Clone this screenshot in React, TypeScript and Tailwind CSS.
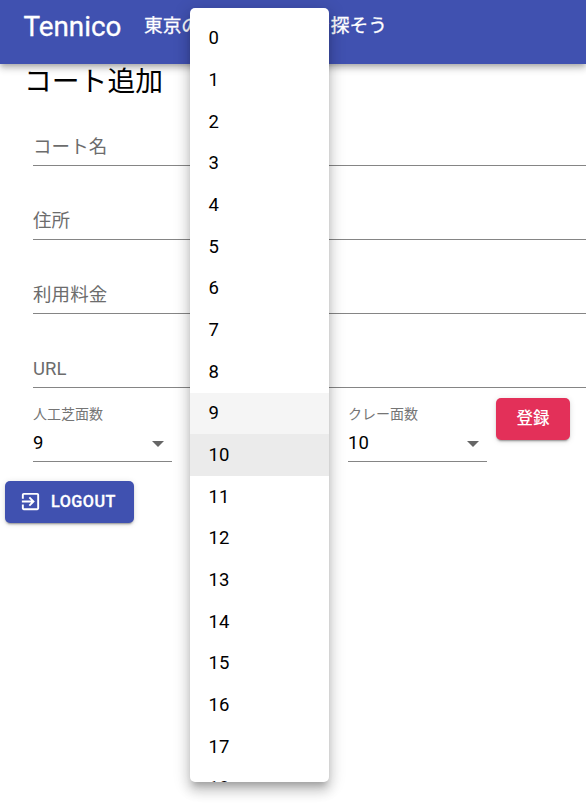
import React from 'react';

const jp = "font-['Roboto','Noto_Sans_CJK_JP',sans-serif]";

function Field({ label }: { label: string }) {
  return (
    <div className="ml-[33px] flex h-[74.1px] flex-col justify-end">
      <div className="flex h-[38px] items-center border-b border-[#858585] pt-[2px] text-[18.5px] tracking-[0.1px] text-[#6c6c6c]">
        {label}
      </div>
    </div>
  );
}

function Select({ label, value }: { label: string; value: string }) {
  return (
    <div className="flex h-[73.6px] w-[139px] shrink-0 flex-col">
      <div className="mt-[16px] h-[21px] whitespace-nowrap text-[14px] leading-[21px] text-[#757575]">{label}</div>
      <div className="flex h-[36.6px] items-center justify-between border-b border-[#858585] pr-[8px] text-[18.5px] text-black">
        <span className="pt-[2px]">{value}</span>
        <svg width="12" height="6" viewBox="0 0 12 6" className="mt-[2px]">
          <path d="M0 0h12L6 6z" fill="#666666" />
        </svg>
      </div>
    </div>
  );
}

function Menu() {
  return (
    <div className="absolute left-[190px] top-[8px] h-[774px] w-[139px] overflow-hidden rounded-[5px] bg-white pt-[9.6px] shadow-[0_6px_6px_-3px_rgba(0,0,0,0.2),0_9px_12px_1px_rgba(0,0,0,0.14),0_3px_16px_3px_rgba(0,0,0,0.12)]">
      {Array.from({ length: 19 }, (_, n) => (
        <div
          key={n}
          className={`flex h-[41.68px] items-center pl-[18.5px] pt-[1.4px] text-[18.5px] tracking-[0.17px] text-black ${
            n === 9 ? 'bg-[#f5f5f5]' : n === 10 ? 'bg-[#ebebeb]' : ''
          }`}
        >
          {n}
        </div>
      ))}
    </div>
  );
}

export default function App() {
  return (
    <div className={`relative h-[804px] w-[586px] overflow-hidden bg-white ${jp}`}>
      <header className="relative flex h-[64px] bg-[#4051b0] pl-[23.5px] text-white shadow-[0_2px_5px_-1px_rgba(0,0,0,0.2),0_5px_6px_0_rgba(0,0,0,0.14),0_1px_12px_0_rgba(0,0,0,0.12)]">
        <div className="h-[54px] w-[120.5px] text-[27.8px] leading-[54px] [-webkit-text-stroke:0.3px_white]">Tennico</div>
        <div className="h-[52px] whitespace-nowrap text-[18.7px] leading-[52px] [-webkit-text-stroke:0.3px_white]">東京のテニスコートを探そう</div>
      </header>
      <h1 className="relative h-[28px] pl-[24px] text-[27.8px] leading-[36px] text-black">コート追加</h1>
      <Field label="コート名" />
      <Field label="住所" />
      <Field label="利用料金" />
      <Field label="URL" />
      <div className="flex pl-[33px]">
        <Select label="人工芝面数" value="9" />
        <div className="w-[176px] shrink-0" />
        <Select label="クレー面数" value="10" />
        <button className="ml-[9px] mt-[9.4px] flex h-[42px] w-[74px] items-center justify-center rounded-[5px] bg-[#e33059] pt-[1px] text-[16.5px] font-medium text-white shadow-[0_3px_1px_-2px_rgba(0,0,0,0.2),0_2px_2px_0_rgba(0,0,0,0.14),0_1px_6px_0_rgba(0,0,0,0.12)]">
          登録
        </button>
      </div>
      <button className="ml-[5px] mt-[19px] flex h-[42px] w-[129px] items-center rounded-[5px] bg-[#4051b0] pl-[14px] text-[16.2px] font-medium tracking-[0.46px] text-white shadow-[0_3px_1px_-2px_rgba(0,0,0,0.2),0_2px_2px_0_rgba(0,0,0,0.14),0_1px_6px_0_rgba(0,0,0,0.12)]">
        <svg width="23" height="23" viewBox="0 0 24 24" fill="currentColor" className="mr-[9px] shrink-0">
          <path d="M10.09 15.59 11.5 17l5-5-5-5-1.41 1.41L12.67 11H3v2h9.67l-2.58 2.59zM19 3H5c-1.11 0-2 .9-2 2v4h2V5h14v14H5v-4H3v4c0 1.1.89 2 2 2h14c1.1 0 2-.9 2-2V5c0-1.1-.9-2-2-2z" />
        </svg>
        <span className="[-webkit-text-stroke:0.3px_white]">LOGOUT</span>
      </button>
      <Menu />
    </div>
  );
}
